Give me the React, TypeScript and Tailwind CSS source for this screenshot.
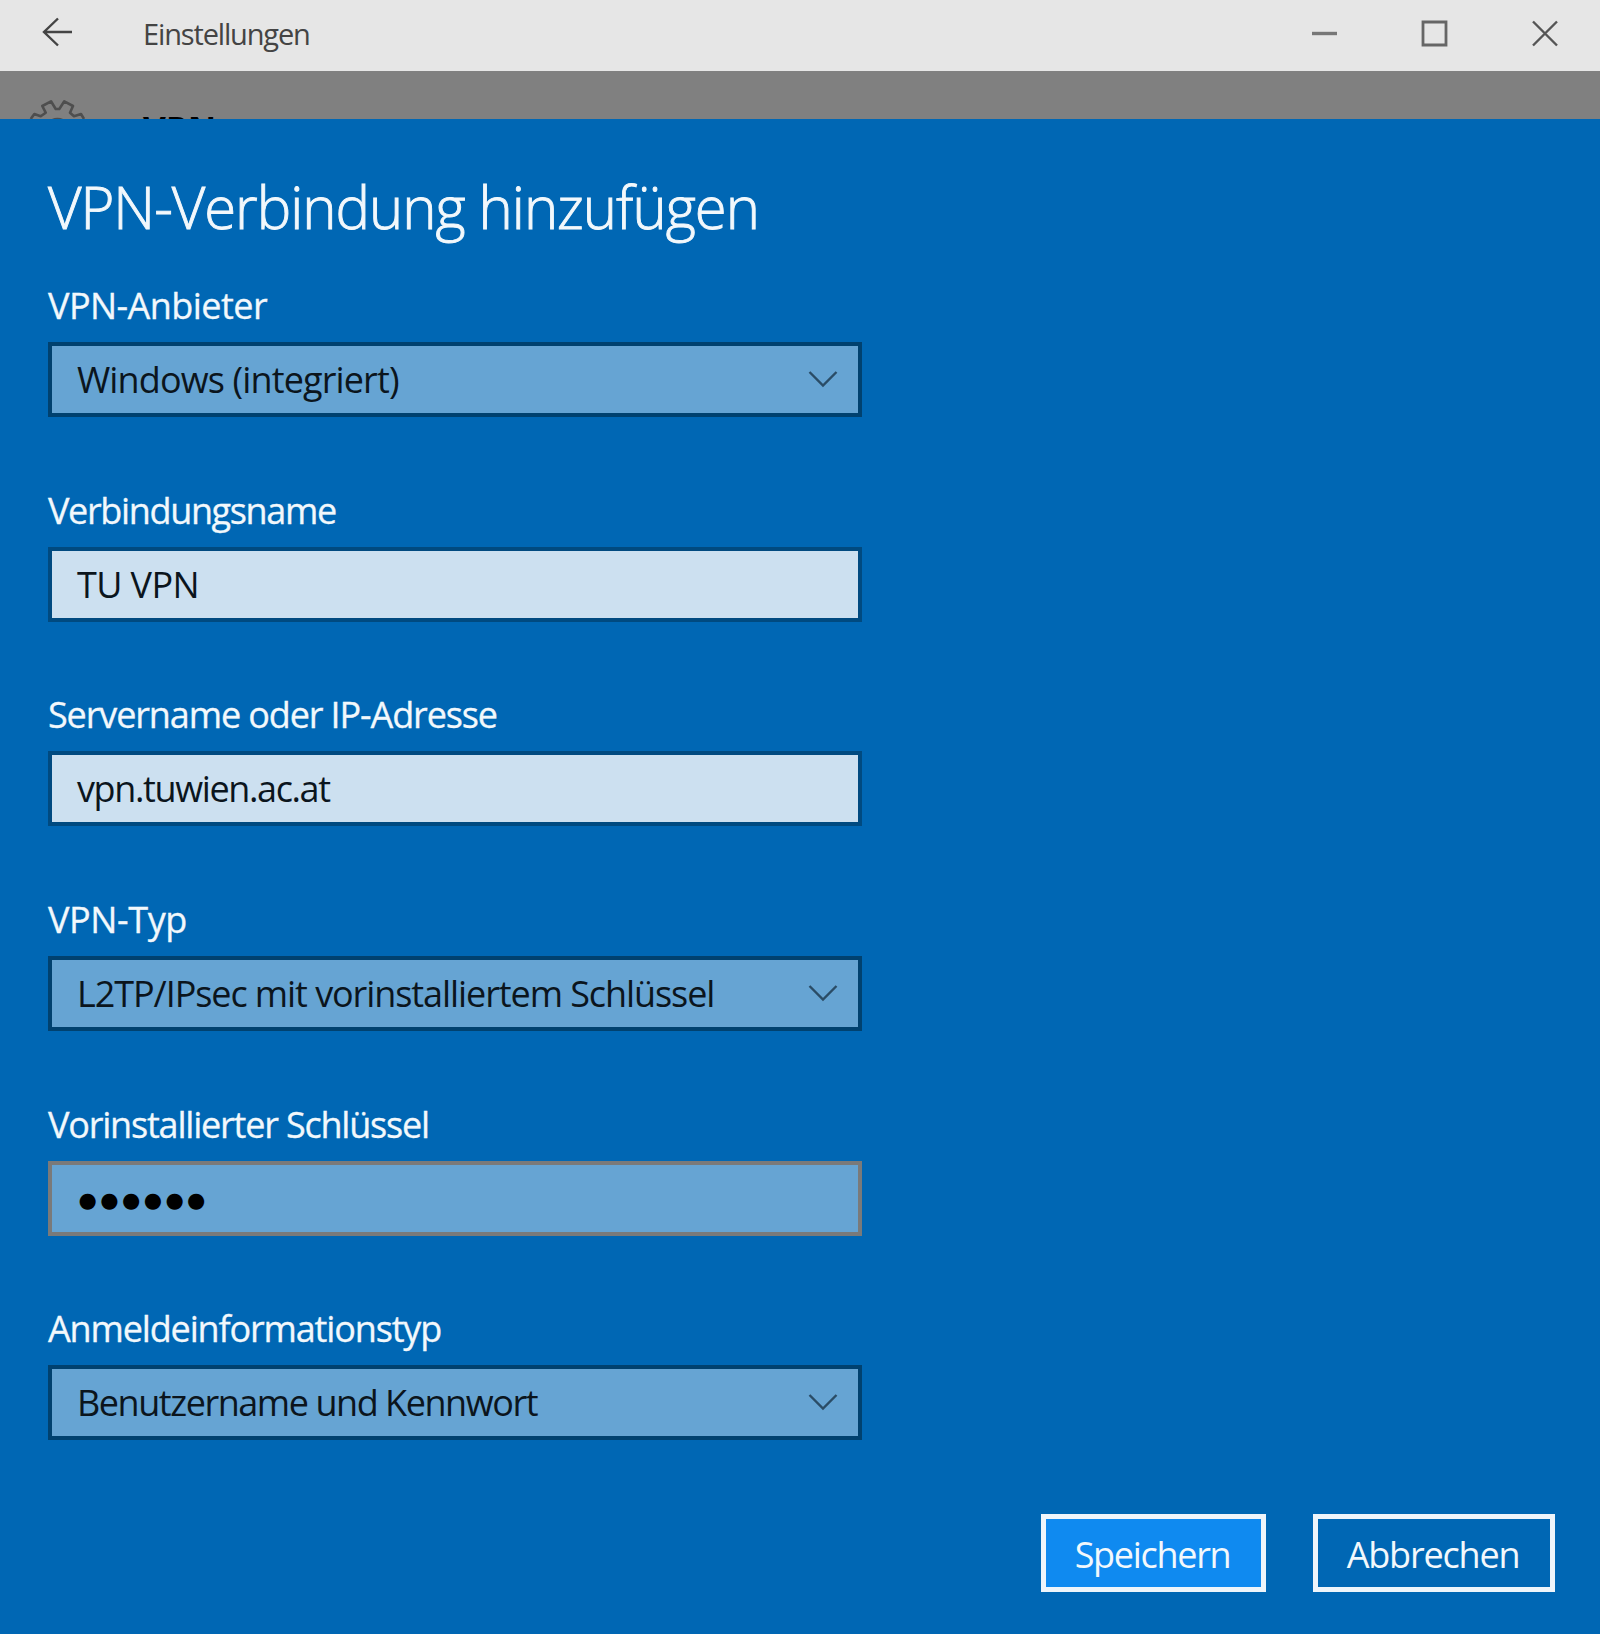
import clsx from 'clsx'

interface Field {
  label: string
  labelSpacing: string
  value: string
  valueSpacing: string
  kind: 'select' | 'text' | 'password'
}

const FIELDS: Field[] = [
  { label: 'VPN-Anbieter', labelSpacing: 'tracking-[-0.55px]', value: 'Windows (integriert)', valueSpacing: 'tracking-[-0.87px]', kind: 'select' },
  { label: 'Verbindungsname', labelSpacing: 'tracking-[-1.35px]', value: 'TU VPN', valueSpacing: 'tracking-[-0.6px]', kind: 'text' },
  { label: 'Servername oder IP-Adresse', labelSpacing: 'tracking-[-1.12px]', value: 'vpn.tuwien.ac.at', valueSpacing: 'tracking-[-1.38px]', kind: 'text' },
  { label: 'VPN-Typ', labelSpacing: 'tracking-[-0.4px]', value: 'L2TP/IPsec mit vorinstalliertem Schlüssel', valueSpacing: 'tracking-[-1.08px]', kind: 'select' },
  { label: 'Vorinstallierter Schlüssel', labelSpacing: 'tracking-[-1.2px]', value: '●●●●●●', valueSpacing: 'tracking-[3.4px]', kind: 'password' },
  { label: 'Anmeldeinformationstyp', labelSpacing: 'tracking-[-1.15px]', value: 'Benutzername und Kennwort', valueSpacing: 'tracking-[-1.45px]', kind: 'select' },
]

function TitleBar() {
  return (
    <header className="flex h-[71px] items-center bg-[#e6e6e6] text-[#444]">
      <svg className="ml-[42px] mb-[7px] h-8 w-8" viewBox="0 0 32 32" fill="none" stroke="#444" strokeWidth="2.4">
        <path d="M30 16H2M16 2.5L2 16l14 13.5" />
      </svg>
      <span className="ml-[69px] mb-[4px] text-[29px] leading-10 tracking-[-1.15px] whitespace-nowrap">Einstellungen</span>
      <div className="ml-auto mr-[42px] mb-[4px] flex items-center gap-[84px]">
        <svg className="h-[27px] w-[26px]" viewBox="0 0 26 27">
          <path d="M1 13.5h25" stroke="#777" strokeWidth="3.4" />
        </svg>
        <svg className="h-[27px] w-[27px]" viewBox="0 0 27 27" fill="none">
          <path d="M2 2h23v23H2z" stroke="#666" strokeWidth="2.8" />
        </svg>
        <svg className="h-[27px] w-[26px]" viewBox="0 0 26 27" fill="none">
          <path d="M1 1.5l24 24M25 1.5l-24 24" stroke="#555" strokeWidth="2.4" />
        </svg>
      </div>
    </header>
  )
}

// Settings page header, dimmed behind the dialog
function DimmedHeader() {
  return (
    <div className="flex h-[48px] items-start overflow-hidden bg-[#808080]">
      <svg className="ml-[26px] mt-[28px] h-[62px] w-[62px] shrink-0" viewBox="0 0 62 62" fill="none" stroke="#4e4e4e" strokeWidth="2.6" strokeLinejoin="round">
        <path d="M4.700 20L8.300 15l6.400 2.300 5-3.600L16.300 7 25 2.300l4.700 7.700h3.600l5-7.700L47 7l-3 6.700 4 3.600L55 15l3 5" />
        <circle cx="31.500" cy="31" r="11" />
      </svg>
      <span className="ml-[55px] mt-[35px] text-[35px] leading-[48px] font-bold text-black">VPN</span>
    </div>
  )
}

function FormField({ field }: { field: Field }) {
  return (
    <div className="h-[204.7px] shrink-0">
      <label className={clsx('block h-[48px] text-[36px] leading-[48px] whitespace-nowrap text-[#f2f8fc] [-webkit-text-stroke:0.3px_#f2f8fc]', field.labelSpacing)}>
        {field.label}
      </label>
      <div
        className={clsx(
          'mt-3 flex h-[75px] w-[814px] items-center justify-between border-4 pr-[20px] pt-px pl-[25px] text-[36px] whitespace-nowrap text-[#0b151d]',
          field.kind === 'select' && 'border-[#00416f] bg-[#66a4d3]',
          field.kind === 'text' && 'border-[#004a80] bg-[#cce0f0]',
          field.kind === 'password' && 'border-[#7a7a7a] bg-[#66a4d3]',
        )}
      >
        {field.kind === 'password' ? (
          <span className={clsx('mt-[3px] ml-[1.5px] font-["DejaVu_Sans"] text-[21px] text-black', field.valueSpacing)}>{field.value}</span>
        ) : (
          <span className={field.valueSpacing}>{field.value}</span>
        )}
        {field.kind === 'select' && (
          <svg className="mb-[2px] h-[18px] w-[30px]" viewBox="0 0 30 18" fill="none" stroke="#2a4c66" strokeWidth="2.4">
            <path d="M1.500 2L15 15.500 28.500 2" />
          </svg>
        )}
      </div>
    </div>
  )
}

export default function App() {
  return (
    <div className="flex h-[1634px] w-[1600px] flex-col overflow-hidden font-['Open_Sans',sans-serif]">
      <TitleBar />
      <DimmedHeader />
      <main className="flex flex-1 flex-col bg-[#0067b4] pl-[48px]">
        <h1 className="mt-[48px] h-[115px] text-[58px] leading-[80px] font-light tracking-[-1.02px] whitespace-nowrap text-[#f2f8fc] [-webkit-text-stroke:0.9px_#f2f8fc]">
          VPN-Verbindung hinzufügen
        </h1>
        {FIELDS.map(f => (
          <FormField key={f.label} field={f} />
        ))}
        <div className="mt-[3.800px] mr-[45px] flex justify-end gap-[47px] text-[36px] text-[#f2f8fc]">
          <button className="flex h-[78px] w-[225px] items-center justify-center border-[5px] border-[#eef5fb] bg-[#0f8af0] pt-[4px] pr-[2px] tracking-[-1.3px]">
            Speichern
          </button>
          <button className="flex h-[78px] w-[242px] items-center justify-center border-[5px] border-[#eef5fb] pt-[4px] pr-[2px] tracking-[-1.2px]">
            Abbrechen
          </button>
        </div>
      </main>
    </div>
  )
}
